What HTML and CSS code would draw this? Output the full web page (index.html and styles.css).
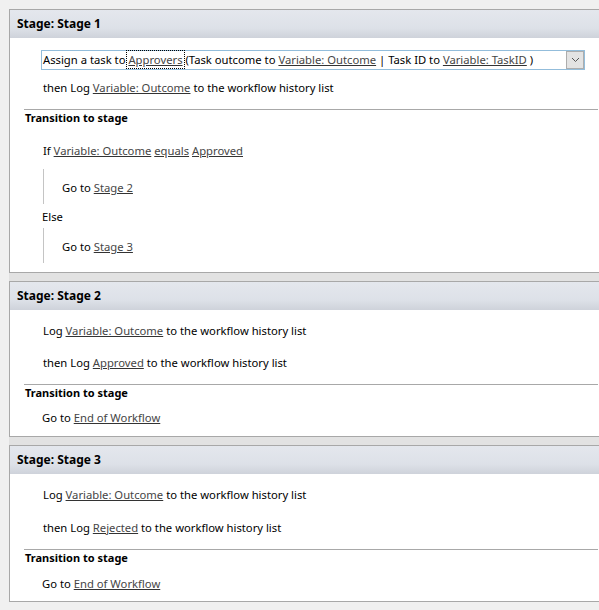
FILE: index.html
```html
<!DOCTYPE html>
<html>
<head>
<meta charset="utf-8">
<link rel="stylesheet" href="styles.css">
</head>
<body>
<div class="stages">
  <section class="stage">
    <div class="stage-head">Stage: Stage 1</div>
    <div class="stage-body">
      <div class="action-box">
        <span class="action-text">Assign a task to <a class="lnk focus">Approvers</a> (Task outcome to <a class="lnk">Variable: Outcome</a> | Task ID to <a class="lnk">Variable: TaskID</a> )</span>
        <span class="dd-btn"><svg width="9" height="6" viewBox="0 0 9 6"><path d="M1 1 L4.5 4.5 L8 1" fill="none" stroke="#555" stroke-width="1"/></svg></span>
      </div>
      <div class="line gap10">then Log <a class="lnk">Variable: Outcome</a> to the workflow history list</div>
      <div class="sep"></div>
      <div class="trans">Transition to stage</div>
      <div class="line cond">If <a class="lnk">Variable: Outcome</a> <a class="lnk">equals</a> <a class="lnk">Approved</a></div>
      <div class="branch br-if"><div class="line">Go to <a class="lnk">Stage 2</a></div></div>
      <div class="line else">Else</div>
      <div class="branch br-else"><div class="line">Go to <a class="lnk">Stage 3</a></div></div>
    </div>
  </section>
  <section class="stage">
    <div class="stage-head">Stage: Stage 2</div>
    <div class="stage-body tall">
      <div class="line first">Log <a class="lnk">Variable: Outcome</a> to the workflow history list</div>
      <div class="line gap16">then Log <a class="lnk">Approved</a> to the workflow history list</div>
      <div class="sep"></div>
      <div class="trans">Transition to stage</div>
      <div class="line goto">Go to <a class="lnk">End of Workflow</a></div>
    </div>
  </section>
  <section class="stage">
    <div class="stage-head">Stage: Stage 3</div>
    <div class="stage-body">
      <div class="line first">Log <a class="lnk">Variable: Outcome</a> to the workflow history list</div>
      <div class="line gap17">then Log <a class="lnk">Rejected</a> to the workflow history list</div>
      <div class="sep"></div>
      <div class="trans">Transition to stage</div>
      <div class="line goto goto-wide">Go to <a class="lnk">End of Workflow</a></div>
    </div>
  </section>
</div>
</body>
</html>
```

FILE: styles.css
```css
html, body {
  margin: 0;
  padding: 0;
}
body {
  background: #f0f0f0;
  font-family: "Noto Sans", "Open Sans", sans-serif;
  font-size: 11.25px;
  color: #000;
  overflow: hidden;
  width: 599px;
  height: 610px;
}
.stages {
  margin: 9px 0 0 9px;
  width: 600px;
  display: flex;
  flex-direction: column;
  gap: 8px;
  background: #e2e2e2;
}
.stage {
  border: 1px solid #a8a8a8;
  background: #fff;
}
.stage-head {
  height: 28px;
  line-height: 28px;
  padding-left: 7px;
  font-weight: bold;
  font-size: 12px;
  background: linear-gradient(to bottom, #e4e7ed 0%, #dde1e8 65%, #ced2da 100%);
}
.stage-body {
  padding: 0 0 9px 0;
}
.stage-body.tall {
  padding-bottom: 10px;
}
.line {
  line-height: 16px;
  height: 16px;
  padding-left: 33px;
  white-space: nowrap;
}
.lnk {
  color: #454545;
  text-decoration: underline;
  text-decoration-color: #333;
}
.focus {
  outline: 1px dotted #000;
  outline-offset: 1px;
}
.action-box {
  margin: 12px 0 0 31px;
  width: 542px;
  height: 18px;
  border: 1px solid #93bddb;
  display: flex;
  align-items: center;
  justify-content: space-between;
  line-height: 16px;
}
.action-text {
  padding-left: 1px;
  white-space: nowrap;
}
.dd-btn {
  border: 1px solid #adadad;
  background: #e3e3e3;
  display: flex;
  align-items: center;
  justify-content: center;
  box-sizing: border-box;
  height: 18px;
  width: 18px;
}
.gap10 { margin-top: 10px; }
.gap16 { margin-top: 16px; }
.gap17 { margin-top: 17px; }
.first { margin-top: 13px; }
.sep {
  margin: 13px 10px 0 14px;
  height: 1px;
  background: #a8a8a8;
}
.trans {
  font-weight: bold;
  font-size: 11px;
  line-height: 16px;
  padding-left: 15px;
}
.cond { margin-top: 17px; }
.branch {
  margin-left: 33px;
  border-left: 1px solid #c4c4c4;
  padding: 11px 0 8px 0;
}
.branch .line {
  padding-left: 18px;
}
.br-if { margin-top: 10px; }
.else { margin-top: 5px; padding-left: 32px; }
.br-else { margin-top: 3px; }
.goto { margin-top: 9px; padding-left: 32px; }
.goto-wide { margin-top: 10px; }
```
